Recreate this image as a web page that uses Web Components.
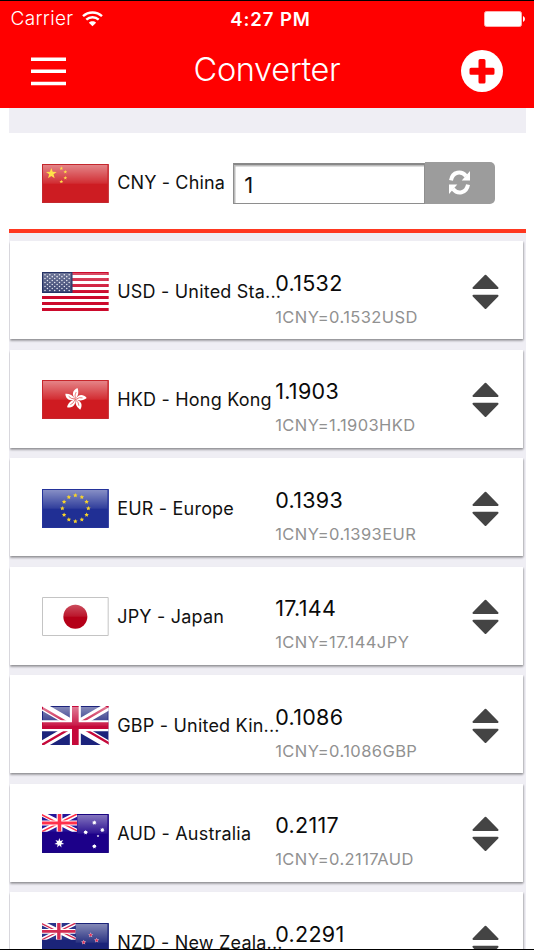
<!DOCTYPE html>
<html lang="en">
<head>
<meta charset="utf-8">
<title>Converter</title>
<style>
html,body{margin:0;height:950px;overflow:hidden;background:#fff}
body{font-family:Inter,"Liberation Sans",sans-serif;color:#111}
</style>
</head>
<body>
<converter-app></converter-app>
<script>
const define = (name, css, html) => customElements.define(name, class extends HTMLElement {
  constructor() {
    super();
    this.attachShadow({mode: 'open'}).innerHTML = `<style>${css}</style>` + (typeof html === 'function' ? html(this) : html);
  }
});

const star = (cx, cy, r, n = 5, k = .4, fill = '#ffe24a', rot = 0) => {
  const p = [];
  for (let i = 0; i < n * 2; i++) {
    const a = -Math.PI / 2 + i * Math.PI / n + rot, q = i % 2 ? r * k : r;
    p.push((cx + q * Math.cos(a)).toFixed(2) + ',' + (cy + q * Math.sin(a)).toFixed(2));
  }
  return `<polygon points="${p.join(' ')}" fill="${fill}"/>`;
};
const jack = (w, h, blue, red, white = 24, thin = 7) => `<svg x="0" y="0" width="${w}" height="${h}" viewBox="0 0 200 117" preserveAspectRatio="none">
  <path fill="${blue}" d="M0 0h200v117H0z"/>
  <path stroke="#fff" stroke-width="${white}" d="M0 0L200 117M200 0L0 117"/>
  <path stroke="${red}" stroke-width="${thin}" d="M-4 3L96 61.500M204 -2L104 56M204 114L104 55.500M-4 119L96 61"/>
  <path stroke="#fff" stroke-width="33" d="M100 0V117M0 59H200"/>
  <path stroke="${red}" stroke-width="20" d="M100 0V117M0 59H200"/></svg>`;
const edge = c => `<path fill="none" stroke="${c}" stroke-width="3" d="M1.500 1.500h197v114H1.500z"/>`;
const gloss = '<path fill="url(#g)" d="M3 3h194v56H3z"/>';
const petal = [0,72,144,216,288].map(a => `<g transform="rotate(${a + 4} 100 58)"><path fill="#fff" d="M100 57C88 47 88 32 104 24C109 34 109 47 100 57z"/><path fill="none" stroke="#d33" stroke-width="1.800" d="M100 55Q96 45 101 36"/></g>`).join('');
const FLAGS = {
  cn: `<path fill="#cd1c22" d="M0 0h200v117H0z"/>${gloss}${star(28,29,17)}${star(58,13,6)}${star(70,24,6)}${star(70,42,6)}${star(58,53,6)}${edge('#c4282e')}`,
  us: (() => {
    let s = '<path fill="#fff" d="M0 0h200v117H0z"/>';
    for (let i = 0; i < 7; i++) s += `<path fill="#cc0a2c" d="M0 ${i * 18}h200v9H0z"/>`;
    s += '<path fill="#35406f" d="M0 0h91v63H0z"/>';
    for (let r = 0; r < 9; r++) for (let c = 0; c < (r % 2 ? 5 : 6); c++) s += `<circle cx="${9 + c * 14.500 + (r % 2 ? 7.250 : 0)}" cy="${8 + r * 5.900}" r="2.300" fill="#e4e6ef"/>`;
    return s + '<path fill="url(#g)" opacity=".6" d="M3 3h194v56H3z"/><path fill="none" stroke="#253265" stroke-width="3" d="M1.500 1.500h88v60h-88z"/>';
  })(),
  hk: `<path fill="#cf1b21" d="M0 0h200v117H0z"/>${gloss}${petal}${edge('#c6272c')}`,
  eu: `<path fill="#202f94" d="M0 0h200v117H0z"/>${gloss}${Array.from({length: 12}, (_, i) => star(100 + 39 * Math.sin(i * Math.PI / 6), 58 - 39 * Math.cos(i * Math.PI / 6), 7, 5, .5, '#f7d32c')).join('')}${edge('#24339a')}`,
  jp: `<path fill="#fff" d="M0 0h200v117H0z"/><circle cx="100" cy="59" r="36" fill="#b50018"/><path fill="url(#j)" d="M64 59a36 36 0 0 1 72 0z"/>${edge('#c4c4c4')}`,
  gb: jack(200, 117, '#1c237c', '#c5093a') + gloss,
  au: `<path fill="#1c0089" d="M0 0h200v117H0z"/><path fill="url(#g)" d="M106 3h91v56h-91z"/>${jack(105,53,'#26159a','#ff304b',32,10)}${star(52,87,15,7,.45,'#fff')}${star(157,26,7,7,.6,'#fff')}${star(131,55,7,7,.6,'#fff')}${star(181,48,7,7,.6,'#fff')}${star(168,66,4,5,.5,'#fff')}${star(157,97,7,7,.6,'#fff')}<path fill="none" stroke="#1b0680" stroke-width="3" d="M106 1.500h92.500v114H1.500V54"/>`,
  nz: `<path fill="#1b2479" d="M0 0h200v117H0z"/><path fill="url(#g)" d="M101 3h96v56h-96z"/>${jack(101,50,'#2a338a','#d22b53',30,9)}${[[146,36],[125,58],[164,52],[147,92]].map(([x,y]) => star(x,y,8,5,.45,'#e8c6d6') + star(x,y,5.500,5,.45,'#e2244c')).join('')}<path fill="none" stroke="#1b2479" stroke-width="3" d="M101 1.500h97.500v114H1.500V51"/>`
};
define('country-flag', ':host{display:block;width:66.7px;height:39px;flex:none}svg{display:block}', el => `
<svg width="66.7" height="39" viewBox="0 0 200 117"><defs><linearGradient id="g" x1="0" y1="0" x2="0" y2="1"><stop stop-color="#fff" stop-opacity=".46"/><stop offset="1" stop-color="#fff" stop-opacity=".07"/></linearGradient><linearGradient id="j" x1="0" y1="0" x2="0" y2="1"><stop stop-color="#fff" stop-opacity=".3"/><stop offset="1" stop-color="#fff" stop-opacity=".08"/></linearGradient></defs>${FLAGS[el.getAttribute('code')]}</svg>`);

define('status-bar', `:host{display:grid;grid-template-columns:1fr auto 1fr;align-items:center;height:35px;padding:0 9.500px 0 10.500px;color:#fff;font-size:19px;letter-spacing:.35px}
.l{display:flex;align-items:center;gap:8px;font-weight:350}.t{font-weight:600;font-size:18.500px;letter-spacing:.95px;padding-left:6px}.r{justify-self:end;display:flex}`, `
<div class="l"><span>Carrier</span><svg width="21" height="16" viewBox="0 0 21 16" fill="none" stroke="#fff" stroke-width="2.400"><path d="M1 5.200C6.400.200 14.600.200 20 5.200M4.300 8.700C7.900 5.400 13.100 5.400 16.700 8.700"/><path fill="#fff" stroke="none" d="M6.900 11.700c2-1.900 5.200-1.900 7.200 0L10.500 15.300z"/></svg></div>
<div class="t">4:27 PM</div>
<div class="r"><svg width="41" height="16" viewBox="0 0 41 16"><rect x=".5" y=".5" width="37" height="15" rx="2" fill="#fff" stroke="#ffb0b0"/><path fill="#fff" d="M39 5q2 1 2 3t-2 3z"/></svg></div>`);

define('nav-bar', `:host{display:grid;grid-template-columns:35px 1fr 42px;align-items:center;height:70px;padding:0 30.700px;color:#fff}
h1{margin:0 0 2px 7px;text-align:center;font-size:32.500px;font-weight:350;letter-spacing:-.35px;line-height:40px}svg{display:block}`, `
<svg width="35" height="29" viewBox="0 0 35 29" fill="#fff"><path d="M0 .5h35v3.500H0zM0 12.600h35v3.500H0zM0 24.700h35v3.500H0z"/></svg>
<h1><slot></slot></h1>
<svg width="42" height="42" viewBox="0 0 42 42"><circle cx="21" cy="21" r="21" fill="#fff"/><path fill="#f00" d="M19 9h4q1.500 0 1.500 1.500v7.200h7.500q1.500 0 1.500 1.500v4q0 1.500-1.500 1.500h-7.500v7.300q0 1.500-1.500 1.500h-4q-1.500 0-1.500-1.500v-7.300H10q-1.500 0-1.500-1.500v-4q0-1.500 1.500-1.500h7.500v-7.200Q17.500 9 19 9z"/></svg>`);

define('base-row', `:host{display:flex;align-items:center;box-sizing:border-box;height:100px;padding:0 0 0 33.500px;background:#fff;border-bottom:4px solid #ff3820}
country-flag{margin-top:4px}.n{width:107px;margin:3.500px 0 0 8.500px;font-size:18px;letter-spacing:.14px;white-space:nowrap}
.f{display:flex;align-items:flex-end;margin:3px 0 0 9px}.i{box-sizing:border-box;width:191.500px;height:41px;border:1.500px solid #8e8e8e;border-top:2px solid #888;box-shadow:inset 1.500px 1.500px #bbb;padding:1px 0 0 10px;font-size:22px;line-height:38px}
.b{display:flex;align-items:center;justify-content:center;width:70.500px;height:42px;border-radius:0 5px 5px 0;background:#9c9c9c}`, `
<country-flag code="cn"></country-flag><div class="n">CNY - China</div>
<div class="f"><div class="i">1</div><div class="b"><svg width="21" height="25" viewBox="0 0 21 25"><g fill="none" stroke="#fff" stroke-width="4"><path d="M2 10.300C3.500 1.500 12.500.500 17 6M19 14.700C17.500 23.500 8.500 24.500 4 19"/></g><path fill="#fff" d="M21 1v9.500h-8.300zM0 24v-9.500h8.300z"/></svg></div></div>`);

define('rate-card', `:host{display:flex;align-items:flex-start;box-sizing:border-box;height:98px;margin:0 2.500px 10.500px 1px;padding:30.500px 24.500px 0 32.500px;background:#fff;box-shadow:0 2px 2px rgba(0,0,0,.28),1px 1px 1.500px rgba(0,0,0,.16)}
.n{width:158px;margin:8px 0 0 8.500px;font-size:18px;line-height:24px;letter-spacing:.2px;white-space:nowrap}
.v{flex:1;margin-top:-3px}.a{font-size:21.500px;line-height:28px;letter-spacing:.3px;color:#0a0a0a}.d{margin-top:9px;font-size:16.500px;line-height:22px;letter-spacing:.42px;color:#919191}
svg{margin-top:2px}`, el => `
<country-flag code="${el.getAttribute('flag')}"></country-flag><div class="n"><slot></slot></div>
<div class="v"><div class="a">${el.getAttribute('rate')}</div><div class="d">1CNY=${el.getAttribute('rate')}${el.getAttribute('code')}</div></div>
<svg width="27" height="36" viewBox="0 0 27 36" fill="#444" stroke="#444" stroke-width="2" stroke-linejoin="round"><path d="M1.500 14L13.500 1.700 25.500 14zM1.500 21.800h24L13.500 34z"/></svg>`);

define('converter-app', `:host{display:flex;flex-direction:column;box-sizing:border-box;width:534px;height:950px;overflow:hidden;border-top:1px solid #000;border-bottom:1px solid #000;background:#fff}
header{flex:none;background:#f00;height:107px}main{flex:1;margin:0 8.500px;padding-top:25px;background:#efeef4;overflow:hidden}.list{padding-top:8px}`, `
<header><status-bar></status-bar><nav-bar>Converter</nav-bar></header>
<main><base-row></base-row><div class="list">
<rate-card flag="us" code="USD" rate="0.1532">USD - United Sta...</rate-card>
<rate-card flag="hk" code="HKD" rate="1.1903">HKD - Hong Kong</rate-card>
<rate-card flag="eu" code="EUR" rate="0.1393">EUR - Europe</rate-card>
<rate-card flag="jp" code="JPY" rate="17.144">JPY - Japan</rate-card>
<rate-card flag="gb" code="GBP" rate="0.1086">GBP - United Kin...</rate-card>
<rate-card flag="au" code="AUD" rate="0.2117">AUD - Australia</rate-card>
<rate-card flag="nz" code="NZD" rate="0.2291">NZD - New Zeala...</rate-card>
</div></main>`);
</script>
</body>
</html>
